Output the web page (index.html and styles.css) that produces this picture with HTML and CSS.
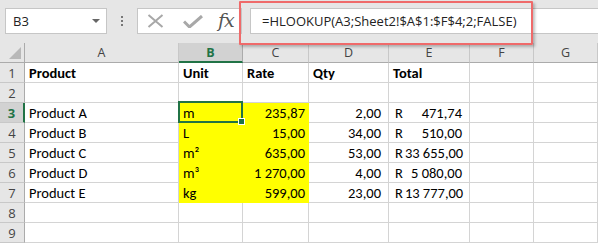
FILE: index.html
```html
<!DOCTYPE html>
<html>
<head>
<meta charset="utf-8">
<link rel="stylesheet" href="styles.css">
</head>
<body>
<div class="app">
  <div class="toolbar">
    <div class="namebox"><span class="nb-text">B3</span><span class="caret"></span></div>
    <div class="grip"><i></i><i></i><i></i></div>
    <div class="fxbox">
      <svg class="ico-x" width="17" height="14" viewBox="0 0 17 14"><path d="M1.5 1 L15.5 13 M15.5 1 L1.5 13" stroke="#a8a8a8" stroke-width="2" fill="none"/></svg>
      <svg class="ico-ok" width="20" height="13" viewBox="0 0 20 13"><path d="M1 6.5 L6.5 12 L19 1" stroke="#a8a8a8" stroke-width="3" fill="none"/></svg>
      <span class="fx">fx</span>
    </div>
    <div class="formula">=HLOOKUP(A3;Sheet2!$A$1:$F$4;2;FALSE)</div>
  </div>
  <div class="highlight"></div>
  <div class="sheet">
    <div class="corner"><span class="tri"></span></div>
    <div class="ch">A</div><div class="ch sel">B</div><div class="ch">C</div><div class="ch">D</div><div class="ch">E</div><div class="ch">F</div><div class="ch">G</div>

    <div class="rh">1</div>
    <div class="c b">Product</div><div class="c b">Unit</div><div class="c b">Rate</div><div class="c b">Qty</div><div class="c b">Total</div><div class="c"></div><div class="c"></div>

    <div class="rh">2</div>
    <div class="c"></div><div class="c"></div><div class="c"></div><div class="c"></div><div class="c"></div><div class="c"></div><div class="c"></div>

    <div class="rh sel">3</div>
    <div class="c">Product A</div><div class="c y active">m</div><div class="c y r">235,87</div><div class="c r q">2,00</div><div class="c acc"><span>R</span><span>471,74</span></div><div class="c"></div><div class="c"></div>

    <div class="rh">4</div>
    <div class="c">Product B</div><div class="c y">L</div><div class="c y r">15,00</div><div class="c r q">34,00</div><div class="c acc"><span>R</span><span>510,00</span></div><div class="c"></div><div class="c"></div>

    <div class="rh">5</div>
    <div class="c">Product C</div><div class="c y">m²</div><div class="c y r">635,00</div><div class="c r q">53,00</div><div class="c acc"><span>R</span><span>33 655,00</span></div><div class="c"></div><div class="c"></div>

    <div class="rh">6</div>
    <div class="c">Product D</div><div class="c y">m³</div><div class="c y r">1 270,00</div><div class="c r q">4,00</div><div class="c acc"><span>R</span><span>5 080,00</span></div><div class="c"></div><div class="c"></div>

    <div class="rh">7</div>
    <div class="c">Product E</div><div class="c y">kg</div><div class="c y r">599,00</div><div class="c r q">23,00</div><div class="c acc"><span>R</span><span>13 777,00</span></div><div class="c"></div><div class="c"></div>

    <div class="rh">8</div>
    <div class="c"></div><div class="c"></div><div class="c"></div><div class="c"></div><div class="c"></div><div class="c"></div><div class="c"></div>

    <div class="rh">9</div>
    <div class="c"></div><div class="c"></div><div class="c"></div><div class="c"></div><div class="c"></div><div class="c"></div><div class="c"></div>
  </div>
</div>
</body>
</html>
```

FILE: styles.css
```css
* { box-sizing: border-box; }
html, body { margin: 0; padding: 0; background: #ffffff; overflow: hidden; }
.app { position: relative; width: 598px; height: 243px; overflow: hidden; }

.toolbar {
  height: 43px;
  background: #e6e6e6;
  display: flex;
  align-items: flex-start;
  padding-top: 8px;
}
.namebox {
  margin-left: 5px;
  width: 102px;
  height: 26px;
  background: #fff;
  border: 1px solid #c6c6c6;
  display: flex;
  align-items: center;
  justify-content: space-between;
  padding: 0 6px 0 7px;
  font-family: "Open Sans", "Liberation Sans", sans-serif;
  font-size: 13px;
  color: #222;
}
.caret {
  width: 0; height: 0;
  border-left: 4px solid transparent;
  border-right: 4px solid transparent;
  border-top: 4px solid #666;
}
.grip {
  width: 30px;
  height: 26px;
  display: flex;
  flex-direction: column;
  align-items: center;
  justify-content: center;
  gap: 2px;
}
.grip i { display: block; width: 2px; height: 2px; background: #777; }
.fxbox {
  width: 105px;
  height: 26px;
  background: #fff;
  border: 1px solid #c6c6c6;
  display: flex;
  align-items: center;
  padding-left: 9px;
}
.ico-x { margin-right: 19px; }
.ico-ok { margin-right: 15px; margin-top: 1px; }
.fx {
  font-family: "DejaVu Serif", "Liberation Serif", serif;
  font-style: italic;
  font-size: 19px;
  color: #555;
  letter-spacing: -1px;
  margin-top: -2px;
}
.formula {
  margin-left: 8px;
  flex: 1;
  height: 26px;
  background: #fff;
  border: 1px solid #c6c6c6;
  border-right: none;
  padding-left: 11px;
  font-family: "Open Sans", "Liberation Sans", sans-serif;
  font-size: 13px;
  line-height: 24px;
  color: #222;
  white-space: nowrap;
}
.highlight {
  position: absolute;
  left: 239px;
  top: 1px;
  width: 294px;
  height: 44px;
  border: 2px solid #ef6a6a;
  border-radius: 1px;
  box-shadow: 2px 2px 3px rgba(0,0,0,0.25);
}

.sheet {
  display: grid;
  grid-template-columns: 25px 154px 64px 66px 80px 81px 64px 64px;
  grid-auto-rows: 20px;
  font-family: "Carlito", "Lato", "Liberation Sans", sans-serif;
  font-size: 14.5px;
  color: #000;
}
.corner {
  background: #e6e6e6;
  border-right: 1px solid #ababab;
  border-bottom: 1px solid #ababab;
  position: relative;
}
.tri {
  position: absolute;
  right: 3px;
  bottom: 3px;
  width: 0; height: 0;
  border-left: 12px solid transparent;
  border-bottom: 12px solid #b8b8b8;
}
.ch {
  background: #e6e6e6;
  border-right: 1px solid #c8c8c8;
  border-bottom: 1px solid #ababab;
  display: flex;
  align-items: center;
  justify-content: center;
  font-family: "Open Sans", "Liberation Sans", sans-serif;
  font-size: 12.5px;
  color: #444;
}
.ch.sel {
  background: #d2d2d2;
  color: #217346;
  font-weight: bold;
  border-bottom: 2px solid #217346;
  border-right-color: #ababab;
}
.rh {
  background: #e6e6e6;
  border-right: 1px solid #ababab;
  border-bottom: 1px solid #c8c8c8;
  display: flex;
  align-items: center;
  justify-content: center;
  font-family: "Open Sans", "Liberation Sans", sans-serif;
  font-size: 13px;
  color: #444;
  padding-top: 1px;
}
.rh.sel {
  background: #d2d2d2;
  color: #217346;
  font-weight: bold;
  border-right: 2px solid #217346;
}
.c {
  border-right: 1px solid #d4d4d4;
  border-bottom: 1px solid #d4d4d4;
  display: flex;
  align-items: center;
  padding: 1px 3px 0 4px;
  white-space: nowrap;
}
.c.b { font-weight: bold; }
.c.r { justify-content: flex-end; padding-right: 3px; }
.c.q { padding-right: 7px; }
.c.y { background: #ffff00; border-color: #ffff00; }
.c.acc { justify-content: space-between; padding-left: 6px; padding-right: 7px; }
.c.acc span:last-child { padding-left: 2px; }
.c.active { position: relative; }
.c.active::after {
  content: "";
  position: absolute;
  left: -1px; top: -2px; right: -1px; bottom: -1px;
  border: 2px solid #217346;
}
.c.active::before {
  content: "";
  position: absolute;
  right: -3px; bottom: -3px;
  width: 5px; height: 5px;
  background: #217346;
  border: 1px solid #fff;
  z-index: 2;
}
```
